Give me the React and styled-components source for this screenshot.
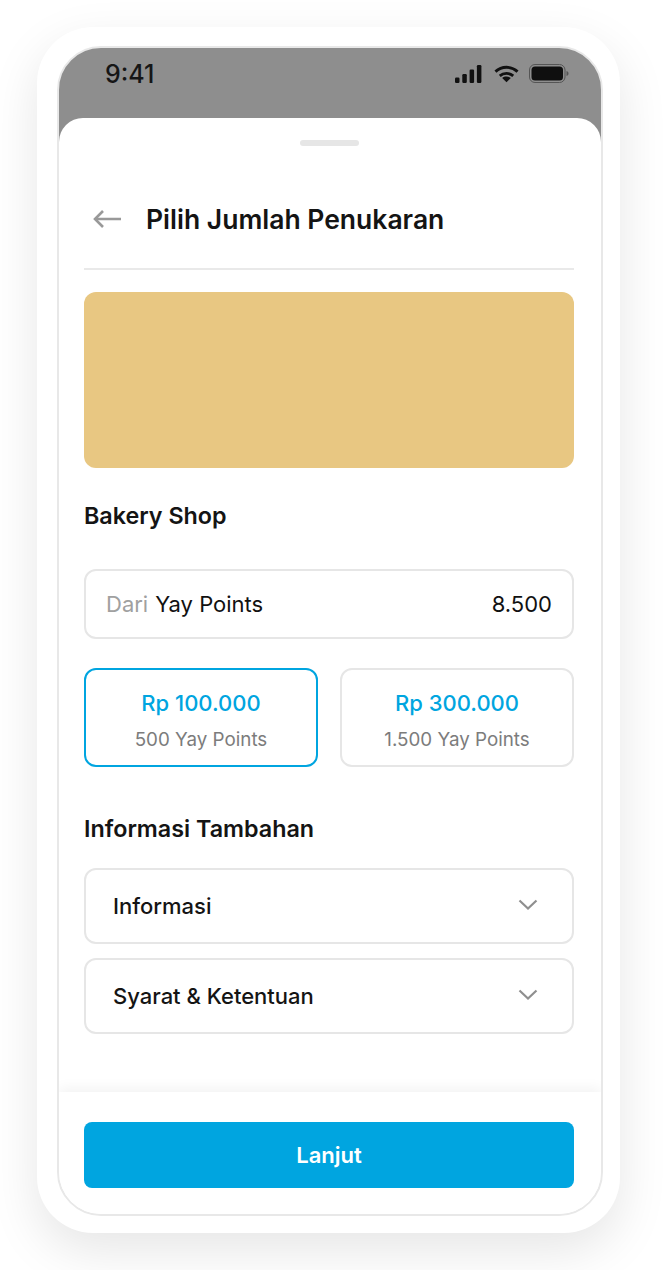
import React from 'react';
import styled, {createGlobalStyle} from 'styled-components';

const GlobalStyle = createGlobalStyle`
    html, body {
        margin: 0;
        padding: 0;
        background: #fff;
    }
    * {
        box-sizing: border-box;
    }
    body {
        font-family: Inter, "Liberation Sans", sans-serif;
        color: #141414;
    }
`

const options = [
    {price: 'Rp 100.000', points: '500 Yay Points', active: true},
    {price: 'Rp 300.000', points: '1.500 Yay Points'},
];

const Chevron = () => (
    <svg width="20" height="12" viewBox="0 0 20 12" fill="none">
        <path d="M1.5 1.5L10 9.5L18.5 1.5" stroke="#8f8f8f" strokeWidth="2.2" />
    </svg>
);

const App = () => {
    return (
        <Page>
            <GlobalStyle />
            <Phone>
                <Screen>
                    <StatusBar>
                        <Time>9:41</Time>
                        <StatusIcons>
                            <svg width="27" height="18" viewBox="0 0 27 18" fill="#111">
                                <rect x="0" y="12.5" width="4.5" height="5.5" rx="1.2" />
                                <rect x="7.3" y="9" width="4.5" height="9" rx="1.2" />
                                <rect x="14.6" y="4.5" width="4.5" height="13.5" rx="1.2" />
                                <rect x="21.9" y="0" width="4.5" height="18" rx="1.2" />
                            </svg>
                            <svg width="25" height="18" viewBox="0 0 26 18" fill="none" stroke="#111" strokeWidth="3">
                                <path d="M1.5 6.5C8 0.5 18 0.5 24.5 6.5" />
                                <path d="M6 11C10 7.5 16 7.5 20 11" />
                                <path d="M13 17.5L8.5 13.2C11 11.2 15 11.2 17.5 13.2Z" fill="#111" stroke="none" />
                            </svg>
                            <svg width="40" height="19" viewBox="0 0 40 19" fill="none">
                                <rect x="0.5" y="0.5" width="35.5" height="18" rx="5.5" stroke="#555" />
                                <rect x="2.5" y="2.5" width="31.5" height="14" rx="3.5" fill="#0f0f0f" />
                                <path d="M37.5 7C39 7.5 39.5 8.5 39.5 9.5C39.5 10.5 39 11.5 37.5 12Z" fill="#555" />
                            </svg>
                        </StatusIcons>
                    </StatusBar>
                    <Sheet>
                        <Handle />
                        <Header>
                            <svg width="30" height="24" viewBox="0 0 30 24" fill="none" stroke="#999" strokeWidth="2.6">
                                <path d="M29 12H3" />
                                <path d="M11 4L3 12L11 20" />
                            </svg>
                            <Title>Pilih Jumlah Penukaran</Title>
                        </Header>
                        <Banner />
                        <ShopName>Bakery Shop</ShopName>
                        <BalanceCard>
                            <BalanceLabel>
                                <Muted>Dari</Muted>
                                <span>Yay Points</span>
                            </BalanceLabel>
                            <span>8.500</span>
                        </BalanceCard>
                        <OptionGrid>
                            {options.map(o => (
                                <Option key={o.price} $active={o.active}>
                                    <Price>{o.price}</Price>
                                    <Points>{o.points}</Points>
                                </Option>
                            ))}
                        </OptionGrid>
                        <SectionTitle>Informasi Tambahan</SectionTitle>
                        <AccordionList>
                            <AccordionRow>
                                <span>Informasi</span>
                                <Chevron />
                            </AccordionRow>
                            <AccordionRow>
                                <span>Syarat &amp; Ketentuan</span>
                                <Chevron />
                            </AccordionRow>
                        </AccordionList>
                    </Sheet>
                    <Footer>
                        <NextButton>Lanjut</NextButton>
                    </Footer>
                </Screen>
            </Phone>
        </Page>
    )
}

export default App;

const Page = styled.div`
    width: 667px;
    height: 1270px;
    padding: 27px 47px 37px 37px;
    overflow: hidden;
`

const Phone = styled.div`
    width: 583px;
    height: 1206px;
    padding: 19px 17px 17px 20px;
    background: #fff;
    border-radius: 56px;
    box-shadow: 0 18px 50px rgba(0, 0, 0, .1);
`

const Screen = styled.div`
    height: 100%;
    display: flex;
    flex-direction: column;
    overflow: hidden;
    background: linear-gradient(#8e8e8e 50%, #fff 50%);
    border: 2px solid #e8e8e8;
    border-radius: 44px;
`

const StatusBar = styled.div`
    flex: 0 0 70px;
    display: flex;
    justify-content: space-between;
    align-items: flex-start;
    padding: 11px 32px 0 46px;
`

const Time = styled.div`
    font-size: 25px;
    line-height: 30px;
    font-weight: 500;
    color: #161616;
`

const StatusIcons = styled.div`
    display: flex;
    align-items: center;
    gap: 10px;
    margin-top: 5px;

    svg:first-child {
        margin-right: 2px;
    }
`

const Sheet = styled.div`
    flex: 1;
    display: flex;
    flex-direction: column;
    padding: 22px 27px 0 25px;
    background: #fff;
    border-radius: 24px 24px 0 0;
`

const Handle = styled.div`
    align-self: center;
    width: 59px;
    height: 6px;
    border-radius: 3px;
    background: #e6e6e6;
`

const Header = styled.div`
    display: flex;
    align-items: center;
    gap: 24px;
    height: 124px;
    padding: 48px 0 24px 8px;
    border-bottom: 2px solid #e9e9e9;
`

const Title = styled.h1`
    margin: 0;
    font-size: 26.5px;
    line-height: 32px;
    font-weight: 600;
    color: #141414;
`

const Banner = styled.div`
    height: 176px;
    margin-top: 22px;
    border-radius: 12px;
    background: #e8c782;
`

const ShopName = styled.h2`
    margin: 33px 0 0;
    font-size: 23.3px;
    line-height: 30px;
    font-weight: 600;
`

const BalanceCard = styled.div`
    display: flex;
    justify-content: space-between;
    align-items: center;
    height: 70px;
    margin-top: 38px;
    padding: 0 20px;
    border: 2px solid #e6e6e6;
    border-radius: 12px;
    font-size: 22px;
    color: #111;
`

const BalanceLabel = styled.div`
    display: flex;
    gap: 7px;
`

const Muted = styled.span`
    color: #a0a0a0;
`

const OptionGrid = styled.div`
    display: grid;
    grid-template-columns: 1fr 1fr;
    gap: 22px;
    margin-top: 29px;
`

const Option = styled.div`
    display: flex;
    flex-direction: column;
    align-items: center;
    height: 99px;
    padding-top: 17px;
    border: 2px solid ${p => p.$active ? '#00a5e0' : '#e6e6e6'};
    border-radius: 12px;
`

const Price = styled.div`
    font-size: 22px;
    line-height: 32px;
    font-weight: 500;
    color: #00a5e0;
`

const Points = styled.div`
    margin-top: 7px;
    font-size: 18.8px;
    line-height: 28px;
    color: #7c7c7c;
`

const SectionTitle = styled.h2`
    margin: 47px 0 0;
    font-size: 23.3px;
    line-height: 30px;
    font-weight: 600;
`

const AccordionList = styled.div`
    display: flex;
    flex-direction: column;
    gap: 14px;
    margin-top: 24px;
`

const AccordionRow = styled.div`
    display: flex;
    justify-content: space-between;
    align-items: center;
    height: 76px;
    padding: 0 34px 0 27px;
    border: 2px solid #e6e6e6;
    border-radius: 12px;
    font-size: 22px;
    font-weight: 500;
    color: #141414;

    svg {
        margin-bottom: 2px;
    }
`

const Footer = styled.div`
    flex: 0 0 122px;
    padding: 30px 27px 0 25px;
    background: #fff;
    box-shadow: 0 -4px 12px rgba(0, 0, 0, .05);
`

const NextButton = styled.div`
    display: flex;
    justify-content: center;
    align-items: center;
    height: 66px;
    border-radius: 8px;
    background: #00a5e0;
    color: #fff;
    font-size: 22px;
    font-weight: 600;
`
